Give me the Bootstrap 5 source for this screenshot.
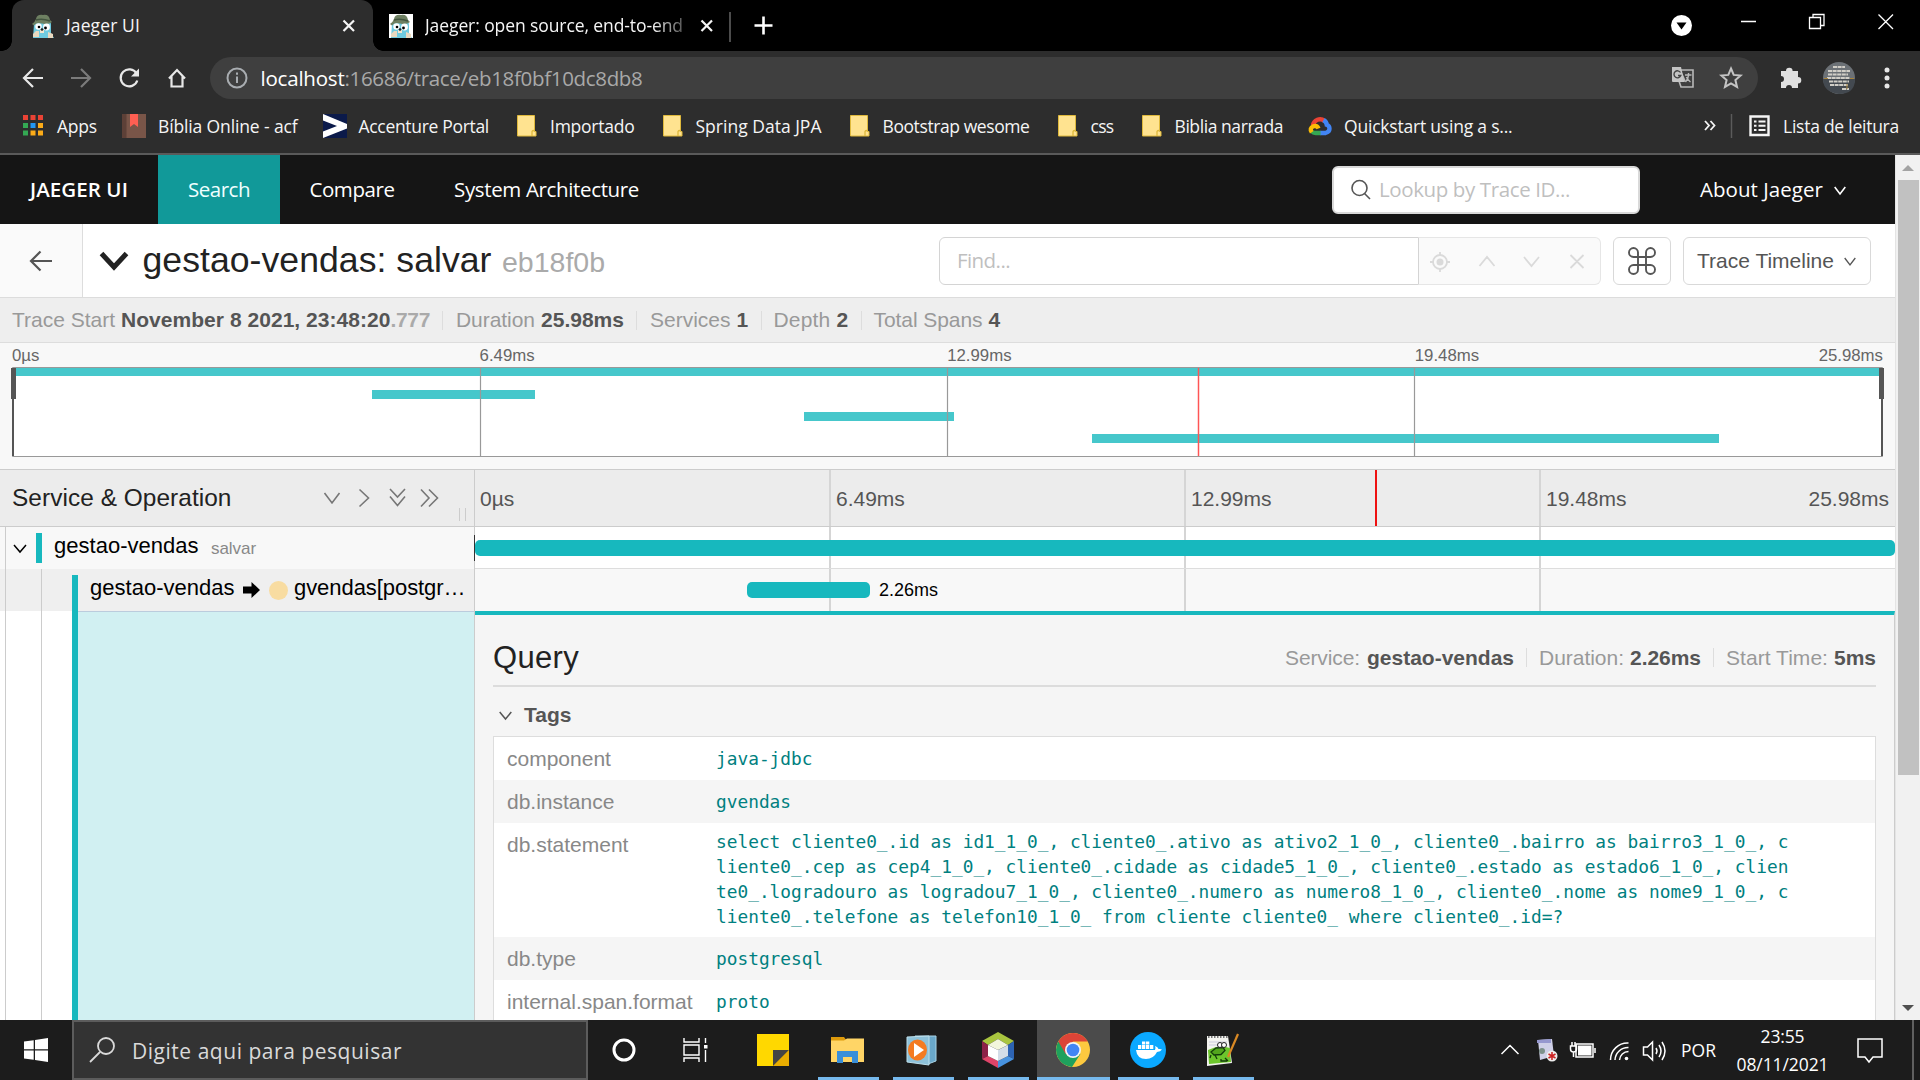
<!DOCTYPE html>
<html lang="pt-BR">
<head>
<meta charset="utf-8">
<meta name="viewport" content="width=device-width, initial-scale=1">
<title>Jaeger UI</title>
<link href="https://cdn.jsdelivr.net/npm/bootstrap@5.3.0/dist/css/bootstrap.min.css" rel="stylesheet">
<style>
:root{--teal:#17b8be}
body{width:1920px;height:1080px;overflow:hidden;background:#fff;font-family:"Liberation Sans",Arial,sans-serif;font-size:21px;line-height:1.2;color:#000}
svg{display:block;flex:none;overflow:visible}
.ln{fill:none;stroke:currentColor}
.ui{font-family:"Open Sans","Noto Sans",sans-serif;white-space:nowrap}
[data-w]{display:inline-block;flex:none;white-space:nowrap}
/* browser */
.tabstrip{height:51px;background:#000;font-size:17.5px;color:#f5f5f5}
.tab-on{width:361px;height:51px;margin-left:12px;background:#2d2d2d;border-radius:12px 12px 0 0;padding-left:19px}
.tab-on::before,.tab-on::after{content:"";position:absolute;bottom:0;width:10px;height:10px}
.tab-on::before{left:-10px;background:radial-gradient(circle at 0 0,transparent 9.5px,#2d2d2d 10px)}
.tab-on::after{right:-10px;background:radial-gradient(circle at 100% 0,transparent 9.5px,#2d2d2d 10px)}
.tab-off{width:357px;height:51px;padding-left:16px}
.fade-end{-webkit-mask-image:linear-gradient(90deg,#000 88%,rgba(0,0,0,.35));mask-image:linear-gradient(90deg,#000 88%,rgba(0,0,0,.35))}
.toolbar{height:54px;background:#2d2d2d;color:#e8e8e8;padding-left:21px}
.omni{width:1548px;height:42px;border-radius:21px;background:#3f3f3f;margin-left:21px;padding-left:16px;font-size:20.5px}
.bookmarks{height:50px;background:#2d2d2d;border-bottom:2px solid #5a5a5a;padding:0 0 6px 21px;gap:25px;font-size:17.5px;color:#f5f5f5}
.bookmarks .bm{gap:12px;display:flex;align-items:center}
/* app bar */
.topnav{height:69px;background:#151515;color:#fff;font-size:20.5px}
.topnav .cell{padding:0 30px;height:69px;display:flex;align-items:center}
.topnav .cur{background:#119999;color:#f0ffff}
.lookup{width:308px;height:48px;background:#fff;border:2px solid #d9d9d9;border-radius:6px;color:#bfbfbf;padding-left:17px;margin-right:60px}
.view{width:1895px;height:865px;overflow:hidden}
.sbar{width:25px;height:865px;background:#f1f1f1;border-left:1px solid #e4e4e4}
.thumb{width:21px;height:595px;background:#c1c1c1}
.tracehead{height:74px;border-bottom:1px solid #dcdcdc}
.backbtn{width:83px;height:73px;background:#fafafa;border-right:1px solid #ddd;color:#555}
.title{font-size:35.6px;color:#222}
.find{width:480px;height:48px;border:1px solid #d4d4d4;border-radius:6px 0 0 6px;padding-left:17px;color:#bfbfbf;font-size:20.5px}
.findadd{width:182px;height:48px;background:#fafafa;border:1px solid #e6e6e6;border-left:0;border-radius:0 6px 6px 0;color:#dadada}
.boxbtn{height:48px;border:1px solid #d9d9d9;border-radius:6px;color:#555}
.summary{height:45px;background:#eee;border-bottom:1px solid #ddd;color:#999;padding-left:12px}
.summary b,.meta b{color:#555}
.sep{width:1px;height:19px;background:#ddd;margin:0 12px}
.mini{height:127px;background:#f8f8f8;border-bottom:1px solid #ccc;padding-left:12px;font-size:16.8px;color:#666}
.mini .lab{width:467.6px;height:24px;line-height:25px}
.colhead{height:57px;background:#ececec;border-bottom:1px solid #ccc}
.left{width:475px;flex:none;overflow:hidden}
.colhead .left,.rows .left{border-right:1px solid #ccc}
.tick{width:355px;border-left:2px solid #d5d5d5;padding-left:5px;flex:none}
.tick:first-child{border-left:0;padding-left:6px;margin-left:-1px}
.tick:nth-child(4){width:356px}
.srow{height:42px}
.guide{flex:none;border-right:1px solid #ccc;height:42px}
.swatch{background:var(--teal);flex:none}
.spanbar{background:var(--teal);border-radius:5px;height:16px;position:absolute}
.detail{height:409px}
.panel{background:#f5f5f5;border-top:4px solid var(--teal);border-right:1px solid #ccc;padding:0 18px;width:1420px}
.dhead{height:72px;border-bottom:2px solid #dcdcdc;padding-top:15px}
.kv{border:1px solid #ddd;background:#fff}
.kv .r{display:flex;height:43px;padding-left:13px;line-height:44px}
.kv .r:nth-child(even){background:#f5f5f5}
.kv .k{width:209px;color:#888;flex:none}
.kv .v{font-family:"DejaVu Sans Mono",monospace;font-size:17.82px;color:#008080;white-space:pre}
/* taskbar */
.taskbar{height:60px;background:#1c1c1c;color:#fff}
.tsearch{width:516px;height:60px;background:#333;border:2px solid #5c5c5c;padding-left:16px;color:#dadada;font-size:21px;margin-right:1px}
.app{height:60px;display:flex;align-items:center;justify-content:center;flex:none}
.run{width:61px;border-bottom:3px solid #76b9ed;padding:3px 2px 0 0;margin-right:14px}
.app.cur{width:73px;background:#4b4b4b;margin:0 8px 0 -6px}
</style>
<script src="https://cdn.jsdelivr.net/npm/bootstrap@5.3.0/dist/js/bootstrap.bundle.min.js"></script>
</head>
<body>
<svg width="0" height="0" class="position-absolute">
<symbol id="gopher" viewBox="0 0 24 24"><path d="M3 10q0-3 9-3t8 4v8l3 5H2z" fill="#6fcbe0"/><path d="M5 17h3v6H2v-3zM17 18l5 2v4h-5z" fill="#e9d9c0"/><path d="M1 10q3-2 4-5 1-5 7-4 6-1 7 5l2 2q-3 3-10 1.500-6-1-8 2z" fill="#6e8062"/><path d="M5 6q6-2 14 1" stroke="#435540" stroke-width="1.500" fill="none"/><circle cx="7.500" cy="12.500" r="3.200" fill="#fff"/><circle cx="15.500" cy="13" r="3.400" fill="#fff"/><circle cx="8" cy="13" r="1.300"/><circle cx="14.500" cy="14" r="1.400"/><path d="M9 16h4v3H9z" fill="#f3e6d0"/><circle cx="11" cy="15.500" r="1.300" fill="#222"/></symbol>
<symbol id="folder" viewBox="0 0 24 24"><path d="M3.500 1.500h17v16h1.500v4.500H3.500z" fill="#ffe390" stroke="#dfb93c"/><path d="M18 22v-4.500q.3-1 2-1" fill="none" stroke="#dfb93c" stroke-width="1.300"/></symbol>
<symbol id="x" viewBox="0 0 14 14"><path d="M1.500 1.500l10.500 10.500M12 1.500L1.500 12" class="ln" stroke-width="2.200"/></symbol>
</svg>

<!-- tab strip -->
<div class="tabstrip ui d-flex align-items-center">
  <div class="tab-on position-relative d-flex align-items-center">
    <svg width="24" height="24"><use href="#gopher"/></svg>
    <span data-w="74" style="margin-left:11px">Jaeger UI</span>
    <svg width="14" height="14" style="margin-left:202px"><use href="#x"/></svg>
  </div>
  <div class="tab-off d-flex align-items-center">
    <svg width="24" height="24"><path d="M0 0h24v24H0z" fill="#fff"/><use href="#gopher"/></svg>
    <span class="fade-end" data-w="258" style="margin-left:12px">Jaeger: open source, end-to-end</span>
    <svg width="14" height="14" style="margin-left:17px"><use href="#x"/></svg>
  </div>
  <svg width="44" height="51"><path d="M0 12v30" stroke="#4c4c4c" stroke-width="2"/><path d="M24.500 25.500h18M33.500 16.500v18" stroke="#fff" stroke-width="2.600"/></svg>
  <svg class="ms-auto" width="250" height="51"><circle cx="11.500" cy="25.500" r="10.500" fill="#fff"/><path d="M6.500 22.500h10l-5 7z"/><path d="M71 21.500h15M139.500 17.500h11v11h-11zM143 17v-2.500h11v11h-3.500M208.500 14.500l14.500 14.500M223 14.500l-14.500 14.500" fill="none" stroke="#fff" stroke-width="1.300"/></svg>
</div>

<!-- toolbar -->
<div class="toolbar ui d-flex align-items-center">
  <svg width="168" height="42"><g class="ln" stroke-width="2.200"><path d="M22 21H3.500M12 12l-9 9 9 9"/><path d="M50 21h19M60 12l9 9-9 9" stroke="#7b7b7b"/><path d="M115.500 16.500a8.500 8.500 0 1 0 .8 7"/><path d="M148 21.500l8-8.500 8 8.500M150.500 19v10.500h11V19"/></g><path d="M118 11.500v8h-8z" fill="#e8e8e8"/></svg>
  <div class="omni d-flex align-items-center">
    <svg width="22" height="22"><circle cx="11" cy="11" r="9.500" fill="none" stroke="#a9adb1" stroke-width="2"/><path d="M11 9.500V16M11 5.500v2.300" stroke="#a9adb1" stroke-width="2"/></svg>
    <span data-w="84" class="text-white" style="margin-left:12.5px">localhost</span><span data-w="298" style="color:#a9a9a9">:16686/trace/eb18f0bf10dc8db8</span>
    <svg class="ms-auto" width="87" height="42"><path d="M9 13h13v17H10l-2-6h6z" fill="#3f3f3f" stroke="#b8b8b8" stroke-width="1.600"/><path d="M1 10h9l3.500 15H2q-1 0-1-1z" fill="#c4c4c4"/><path d="M9.500 15.500a3.500 3.500 0 1 0 .3 3H7" fill="none" stroke="#444" stroke-width="1.400"/><path d="M14 18h6.500M17.500 16v2q0 4-3 7M15.500 20q1 3 4 5" fill="none" stroke="#b8b8b8" stroke-width="1.400"/><path d="M60 11.500l2.700 6.400 6.900.6-5.200 4.600 1.600 6.800-6-3.600-6 3.600 1.600-6.800-5.200-4.600 6.900-.6z" fill="none" stroke="#c4c4c4" stroke-width="2"/></svg>
  </div>
  <svg width="162" height="42"><path d="M23 14h5a3.300 3.300 0 0 1 6.600 0H40v6a3.300 3.300 0 0 1 0 6.600V31h-6a3 3 0 0 0-6 0h-5v-6a3 3 0 0 0 0-6z" fill="#e0e0e0"/><circle cx="81" cy="21" r="16" fill="#6c7176"/><path d="M65 22h32q0 15-16 15-16-2-16-15z" fill="#434950"/><path d="M75 10h12M70 14h22M70 17.500h20M69 21h23M71 24.500h20M72 28h18M84 32h7" stroke="#d0cdc6" stroke-width="1.900" stroke-dasharray="4 .6"/><path d="M66 21.500h4M92 21.500h4M89 27v5" stroke="#a8843c" stroke-width="1"/><g fill="#e8e8e8"><circle cx="129" cy="13" r="2.500"/><circle cx="129" cy="21" r="2.500"/><circle cx="129" cy="29" r="2.500"/></g></svg>
</div>

<!-- bookmarks -->
<div class="bookmarks ui d-flex align-items-center">
  <div class="bm"><svg width="24" height="24"><path d="M2 1h5v5H2zM9.500 1h5v5h-5zM17 1h5v5h-5z" fill="#ea4335"/><path d="M2 9h5v5H2zM2 16.500h5v5H2z" fill="#34a853"/><path d="M9.500 9h5v5h-5z" fill="#2196f3"/><path d="M17 9h5v5h-5zM9.500 16.500h5v5h-5zM17 16.500h5v5h-5z" fill="#fbab18"/></svg><span data-w="40">Apps</span></div>
  <div class="bm"><svg width="24" height="24"><path d="M0 0h24v24H0z" fill="#795548"/><path d="M0 0h4.500v24H0z" fill="#5d4037"/><path d="M8 0h8v13l-4-3-4 3z" fill="#ff5f52"/></svg><span data-w="139.5">Bíblia Online - acf</span></div>
  <div class="bm"><svg width="24" height="24"><path d="M0 0h24v24H0z" fill="#0b1a4a"/><path d="M0 0l24 10v4.500L0 24v-6.500L14 12 0 6.500z" fill="#fff"/></svg><span data-w="130.5">Accenture Portal</span></div>
  <div class="bm"><svg width="24" height="24"><use href="#folder"/></svg><span data-w="84.5">Importado</span></div>
  <div class="bm"><svg width="24" height="24"><use href="#folder"/></svg><span data-w="126">Spring Data JPA</span></div>
  <div class="bm"><svg width="24" height="24"><use href="#folder"/></svg><span data-w="147">Bootstrap wesome</span></div>
  <div class="bm"><svg width="24" height="24"><use href="#folder"/></svg><span data-w="23">css</span></div>
  <div class="bm"><svg width="24" height="24"><use href="#folder"/></svg><span data-w="108.5">Biblia narrada</span></div>
  <div class="bm"><svg width="24" height="24"><g fill="none" stroke-width="4.400"><path d="M5 11.500A7 7 0 0 1 16.500 7" stroke="#ea4335"/><path d="M15.500 6q3 1.800 3.300 4.800 2.700 1 2.700 4t-4 4.200h-5.500" stroke="#4285f4"/><path d="M12.500 19H7.500q-2.300 0-3.500-1.500" stroke="#34a853"/><path d="M10.500 14.500q-1.500-3.500-5-2.200-4.500 2-1.700 6" stroke="#fbbc05"/></g></svg><span data-w="168.5">Quickstart using a s...</span></div>
  <div class="ms-auto d-flex align-items-center" style="padding-right:21px"><svg width="80" height="24"><path d="M2 7l4 4.500-4 4.500M7.500 7l4 4.500-4 4.500" class="ln" stroke-width="1.800"/><path d="M28.500 0v24" stroke="#5b5b5b" stroke-width="1.500"/><path d="M47.500 2.500h18v18.500h-18z" class="ln" stroke-width="2.400"/><path d="M51 7.500h2.500M55.500 7.500h7M51 11.700h2.500M55.500 11.700h7M51 16h2.500M55.500 16h7" class="ln" stroke-width="2"/></svg><span data-w="116">Lista de leitura</span></div>
</div>

<div class="d-flex" style="height:865px">
<main class="view">
  <nav class="topnav ui d-flex align-items-center">
    <div class="cell fw-semibold"><span data-w="98">JAEGER UI</span></div>
    <div class="cell cur"><span data-w="62">Search</span></div>
    <div class="cell" style="padding-left:29.5px"><span data-w="85">Compare</span></div>
    <div class="cell" style="padding-left:29.5px"><span data-w="185">System Architecture</span></div>
    <div class="lookup ms-auto d-flex align-items-center">
      <svg width="20" height="22"><circle cx="8.500" cy="9" r="7.500" fill="none" stroke="#555" stroke-width="1.600"/><path d="M13.500 14.500l5.500 5.500" stroke="#555" stroke-width="1.600"/></svg>
      <span data-w="191" style="margin-left:8px">Lookup by Trace ID...</span>
    </div>
    <span data-w="123">About Jaeger</span>
    <svg width="12" height="9" style="margin:2px 49px 0 11px"><path d="M.7 1l5.300 7 5.300-7" class="ln" stroke-width="1.600"/></svg>
  </nav>

  <header class="tracehead d-flex align-items-center">
    <div class="backbtn d-flex align-items-center justify-content-center"><svg width="24" height="22"><path d="M23 11H2M11.500 1.500L2 11l9.500 9.500" class="ln" stroke-width="2.200"/></svg></div>
    <svg width="30" height="20" style="margin-left:15.5px"><path d="M2.500 2.500l12.500 13.500L27.500 2.500" fill="none" stroke="#222" stroke-width="5"/></svg>
    <span class="title" data-w="349" style="margin-left:14px">gestao-vendas: salvar</span>
    <span data-w="103" style="font-size:28.5px;color:#aaa;margin:4px 0 0 10.5px">eb18f0b</span>
    <div class="find ms-auto d-flex align-items-center ui"><span data-w="53">Find...</span></div>
    <div class="findadd"><svg width="182" height="46"><g class="ln" stroke-width="1.800"><circle cx="21" cy="24" r="7"/><path d="M21 14v4M21 30v4M11 24h4M27 24h4M60.500 28l7.500-9 7.500 9M105 19l7.500 9 7.500-9M151.500 17l13 13M164.500 17l-13 13"/></g><circle cx="21" cy="24" r="3.500" fill="#dadada"/></svg></div>
    <div class="boxbtn d-flex align-items-center justify-content-center" style="width:58px;margin-left:12px"><svg width="28" height="28"><path d="M10 10V5.500A4.500 4.500 0 1 0 5.500 10h17A4.500 4.500 0 1 0 18 5.500v17a4.500 4.500 0 1 0 4.500-4.500h-17a4.500 4.500 0 1 0 4.500 4.500z" class="ln" stroke-width="1.900"/></svg></div>
    <div class="boxbtn d-flex align-items-center" style="width:188px;margin:0 24px 0 12px;padding-left:13px"><span data-w="137">Trace Timeline</span><svg width="12" height="9" style="margin:1px 0 0 10px"><path d="M.7 1l5.300 7 5.300-7" class="ln" stroke-width="1.300"/></svg></div>
  </header>

  <div class="summary d-flex align-items-center">
    <span data-w="103">Trace Start</span><b data-w="269.5" style="margin-left:6px">November 8 2021, 23:48:20</b><b data-w="39.5" style="color:#aaa">.777</b><i class="sep" style="margin-right:13px"></i>
    <span data-w="79">Duration</span><b data-w="83" style="margin-left:6px">25.98ms</b><i class="sep" style="margin-right:13px"></i>
    <span data-w="80.5">Services</span><b data-w="12" style="margin-left:6px">1</b><i class="sep"></i>
    <span data-w="57">Depth</span><b data-w="12" style="margin-left:6px">2</b><i class="sep"></i>
    <span data-w="109">Total Spans</span><b data-w="12" style="margin-left:6px">4</b>
  </div>

  <section class="mini">
    <div class="d-flex position-relative" style="width:1871px"><div class="lab">0µs</div><div class="lab">6.49ms</div><div class="lab">12.99ms</div><div class="lab">19.48ms</div><div class="position-absolute end-0 lab w-auto">25.98ms</div></div>
    <svg width="1871" height="90"><path d="M.5.5h1870v89H.5z" fill="#fff" stroke="#999"/><path d="M1 1h1869v8H1zM360 23h163v9H360zM792 45h150v9H792zM1080 67h627v9H1080z" fill="#46c7cb"/><path d="M468.500 1v88M935.500 1v88M1402.500 1v88" stroke="#999" stroke-width="1.200"/><path d="M1186.500 1v88" stroke="#f55" stroke-width="1.500"/><path d="M1 1v88M1870 1v88" stroke="#555" stroke-width="2"/><path d="M-1 1h5v31h-5zM1867 1h5v31h-5z" fill="#555"/></svg>
  </section>

  <section class="colhead d-flex">
    <div class="left d-flex align-items-center" style="padding-left:12px">
      <span data-w="219.5" style="font-size:24.4px;color:#222">Service &amp; Operation</span>
      <svg width="150" height="57" style="margin-left:92.5px;color:#777"><path class="ln" stroke-width="1.600" d="M.5 23l7.500 10L15.500 23M35.500 19.500l9 8.500-9 8.500M66 19l7.500 8 7.500-8M66 26.500l7.500 9 7.500-9M97 19.500l8 8.500-8 8.500M105 19.500l8.500 8.500-8.500 8.500"/><path d="M135.500 38v13M141.500 38v13" stroke="#ccc"/></svg>
    </div>
    <div class="d-flex position-relative align-items-stretch" style="color:#555;line-height:57px"><div class="tick">0µs</div><div class="tick">6.49ms</div><div class="tick">12.99ms</div><div class="tick">19.48ms</div><div class="position-absolute" style="right:6px">25.98ms</div><i class="position-absolute h-100" style="left:900px;width:2px;background:#e11"></i></div>
  </section>

  <section class="rows">
    <div class="srow d-flex">
      <div class="left d-flex align-items-center" style="background:#f8f8f8;font-size:22px">
        <i class="guide" style="width:6px"></i>
        <svg width="14" height="9" style="margin-left:7px"><path d="M1 1l6 7 6-7" class="ln" stroke-width="1.500"/></svg>
        <i class="swatch" style="width:6px;height:30px;margin-left:9px"></i>
        <span data-w="144.5" style="margin:-3px 0 0 12px">gestao-vendas</span><span data-w="45" style="font-size:17px;color:#888;margin:3px 0 0 12.5px">salvar</span>
      </div>
      <div class="d-flex position-relative" style="border-bottom:1px solid #ddd"><i class="tick"></i><i class="tick"></i><i class="tick"></i><i class="tick"></i><b class="spanbar w-100" style="top:13px"></b><i class="position-absolute" style="left:-1px;top:8px;width:1px;height:26px;background:#333"></i></div>
    </div>
    <div class="srow d-flex">
      <div class="left d-flex align-items-center" style="background:#efefef;font-size:22px">
        <i class="guide" style="width:6px"></i><i class="guide" style="width:36px"></i>
        <i class="swatch align-self-end" style="width:6px;height:36px;margin-left:30px"></i>
        <span data-w="144.5" style="margin:-3px 0 0 12px">gestao-vendas</span>
        <svg width="17" height="16" style="margin-left:8.5px"><path d="M0 4.500h8.500V0L17 8l-8.500 8v-4.500H0z"/></svg>
        <i class="rounded-circle" style="width:19px;height:19px;background:#f8dca1;margin-left:9px"></i>
        <span data-w="171.5" style="margin:-3px 0 0 6px">gvendas[postgr…</span>
      </div>
      <div class="d-flex position-relative" style="background:#f8f8f8"><i class="tick"></i><i class="tick"></i><i class="tick"></i><i class="tick"></i><b class="spanbar" style="top:13px;left:272px;width:123px"></b><span class="position-absolute" data-w="59" style="left:404px;top:11px;font-size:18px">2.26ms</span></div>
    </div>
    <div class="detail d-flex">
      <div class="left d-flex" style="background:#d1f0f2">
        <i class="guide h-100 bg-white" style="width:6px"></i><i class="guide h-100 bg-white" style="width:36px"></i><i class="bg-white" style="width:30px"></i><i class="swatch" style="width:6px"></i>
        <i class="flex-fill" style="height:1px;background:#bcd"></i>
      </div>
      <div class="panel">
        <div class="dhead d-flex align-items-center justify-content-between">
          <span data-w="86" style="font-size:31px;color:#222">Query</span>
          <div class="meta d-flex align-items-center" style="color:#999"><span data-w="75">Service:</span><b data-w="147" style="margin-left:7px">gestao-vendas</b><i class="sep"></i><span data-w="85">Duration:</span><b data-w="71" style="margin-left:6px">2.26ms</b><i class="sep"></i><span data-w="102">Start Time:</span><b data-w="42" style="margin-left:6px">5ms</b></div>
        </div>
        <div class="d-flex align-items-center fw-bold" style="height:49px;color:#555;padding:7px 0 0 6px"><svg width="13" height="9" style="margin-right:12px"><path d="M.7 1l5.800 7 5.800-7" class="ln" stroke-width="1.500"/></svg>Tags</div>
        <div class="kv">
          <div class="r"><span class="k">component</span><span class="v">java-jdbc</span></div>
          <div class="r"><span class="k">db.instance</span><span class="v">gvendas</span></div>
          <div class="r" style="height:114px"><span class="k">db.statement</span><span class="v" style="line-height:25px;padding-top:6px">select cliente0_.id as id1_1_0_, cliente0_.ativo as ativo2_1_0_, cliente0_.bairro as bairro3_1_0_, c
liente0_.cep as cep4_1_0_, cliente0_.cidade as cidade5_1_0_, cliente0_.estado as estado6_1_0_, clien
te0_.logradouro as logradou7_1_0_, cliente0_.numero as numero8_1_0_, cliente0_.nome as nome9_1_0_, c
liente0_.telefone as telefon10_1_0_ from cliente cliente0_ where cliente0_.id=?</span></div>
          <div class="r"><span class="k">db.type</span><span class="v">postgresql</span></div>
          <div class="r"><span class="k">internal.span.format</span><span class="v">proto</span></div>
        </div>
      </div>
    </div>
  </section>
</main>
<aside class="sbar d-flex flex-column align-items-center">
  <svg width="12" height="25"><path d="M0 16h12L6 10z" fill="#a3a3a3"/></svg>
  <i class="thumb"></i>
  <svg class="mt-auto" width="12" height="20"><path d="M0 5h12l-6 6z" fill="#505050"/></svg>
</aside>
</div>

<!-- taskbar -->
<footer class="taskbar ui d-flex align-items-center">
  <div class="app" style="width:72px"><svg width="24" height="24"><path d="M0 3.500l9.700-1.300v9.100H0zM11 2l13-2v11.300H11zM0 12.500h9.700v9.200L0 20.500zM11 12.500h13V24l-13-2z" fill="#fff"/></svg></div>
  <div class="tsearch d-flex align-items-center"><svg width="26" height="26"><circle cx="16" cy="9" r="8" class="ln" stroke-width="1.800"/><path d="M10 15L0 25" class="ln" stroke-width="1.800"/></svg><span data-w="270" style="margin:3px 0 0 16px">Digite aqui para pesquisar</span></div>
  <div class="app" style="width:70px"><svg width="24" height="24"><circle cx="12" cy="12" r="10" class="ln" stroke-width="3"/></svg></div>
  <div class="app" style="width:74px"><svg width="26" height="24"><path d="M1 0v4h15V0M1 24v-4h15v4M1 7h15v10H1zM22.500 0v5M22.500 12v12" class="ln" stroke-width="1.400"/><path d="M21 7h3.500v3.500H21z" fill="#fff"/></svg></div>
  <div class="app" style="width:85px;padding-right:5px"><svg width="32" height="32"><path d="M0 0h32v16L16 32H0z" fill="#ffd800"/><path d="M16 32V16h16z" fill="#444"/><path d="M16 32l16-16v16z" fill="#e9ad00"/></svg></div>
  <div class="app run"><svg width="33" height="28"><path d="M0 1h13l3 4H0z" fill="#dd9a0b"/><path d="M0 4.500h13l3-2h17V26H0z" fill="#ffd566"/><path d="M6 27V15h21v12h-6v-6h-9v6z" fill="#3a8fd9"/></svg></div>
  <div class="app run" style="padding-right:5px"><svg width="31" height="31"><path d="M9 1h21v25l-8 3z" fill="#6aa8ca" stroke="#a9d3e6"/><path d="M1 2l22-1v29L1 27z" fill="#8ec2da" stroke="#bfe0ec"/><ellipse cx="11.500" cy="15" rx="9.500" ry="10.500" fill="#f47b22"/><path d="M8 8l10 7-10 7z" fill="#fff"/></svg></div>
  <div class="app run"><svg width="32" height="36"><path d="M16 0l16 9-6 4-10-6-10 6-6-4z" fill="#a9c53f"/><path d="M0 9l6 4v11l-6 3z" fill="#8d2148"/><path d="M32 9l-6 4v11l6 3z" fill="#2d63b2"/><path d="M0 27l6-3 10 5v7z" fill="#df4469"/><path d="M32 27l-6-3-10 5v7z" fill="#4792df"/><path d="M16 7l10 6-10 5-10-5z" fill="#f3f6dc"/><path d="M6 13l10 5v11L6 24z" fill="#fff"/><path d="M26 13l-10 5v11l10-5z" fill="#d3dde8"/></svg></div>
  <div class="app run cur"><svg width="34" height="34" viewBox="0 0 34 34"><circle cx="17" cy="17" r="17" fill="#fdc93f"/><path d="M17 17L2.300 8.500A17 17 0 0 0 16 34l8.400-13z" fill="#1fa15d"/><path d="M2.300 8.500A17 17 0 0 1 31.700 8.500H17L9.700 21z" fill="#dc4437"/><circle cx="17" cy="17" r="8" fill="#f4f4f4"/><circle cx="17" cy="17" r="6.300" fill="#4285f4"/></svg></div>
  <div class="app run"><svg width="36" height="36"><circle cx="18" cy="18" r="18" fill="#0aa8ff"/><path d="M6 18h19q1-2 0-4 3 1 3.500 3 2-.4 3.500.6-1.500 2.400-5 2.400-3.500 7-11 7-9 0-10-9z" fill="#fff"/><path d="M8 13h3.300v4H8zM12 13h3.300v4H12zM16 13h3.300v4H16zM20 13h3.300v4H20zM12 9.500h3.300v3H12zM16 9.500h3.300v3H16z" fill="#fff"/></svg></div>
  <div class="app run"><svg width="34" height="34"><path d="M1 3h21l4 27-25 3z" fill="#f4f4f0"/><path d="M2 17q11-6 22-2l1 14-22 2z" fill="#6cc62c"/><path d="M3 9h18M3 12h18" stroke="#ccd" stroke-width="1"/><path d="M2 4h20" stroke="#777" stroke-width="2" stroke-dasharray="1.500 1.500"/><path d="M5 19l5-4 7-.5 2 3-4 4-7 .5z" fill="#52a51d" stroke="#123d0a" stroke-width="1.300"/><circle cx="14" cy="12" r="2.500" fill="#fff" stroke="#222"/><circle cx="18" cy="12" r="2.500" fill="#fff" stroke="#222"/><path d="M5 22l-1 3M9 22l2 4M15 26v2h6M19 25l3 3" fill="none" stroke="#123d0a" stroke-width="1.300"/><path d="M22 24L32 1" stroke="#d98924" stroke-width="2.200"/></svg></div>
  <div class="ms-auto d-flex align-items-center">
    <svg width="166" height="60"><g class="ln" stroke-width="1.500"><path d="M1.500 34l8.500-8.500L18.500 34M76 24h17v13H76zM95 28v5"/><path d="M70.500 26h6v3q0 3-3 3t-3-3zM72 22v4M75 22v4M73.500 32v5"/><path d="M110.500 40a17 17 0 0 1 18-17M115 40a13 13 0 0 1 13.500-12.500M119.500 40a9 9 0 0 1 9-8.500"/><path d="M143.500 27h4l5-5v18l-5-5h-4zM156 28q2 3 0 6M159 25q4 6 0 12M162 22q6 9 0 18"/></g><path d="M78 25.500h13.500v10H78z" fill="#fff"/><circle cx="126.500" cy="38.500" r="1.800" fill="#fff"/><path d="M38 20l14-1 2 17-14 4z" fill="#cfd0e8"/><path d="M37 20l14-1v4H37z" fill="#9698cf"/><circle cx="42" cy="31" r="3" fill="#7d918b"/><circle cx="52" cy="36" r="5.500" fill="#eee"/><path d="M52 32v8M48.500 34l7 4M55.500 34l-7 4" stroke="#c22" stroke-width="1.500"/></svg>
    <span data-w="35" style="font-size:17.500px;margin-left:15px">POR</span>
    <div class="text-center" style="width:93px;margin-left:20px;font-size:17.500px;line-height:28px"><span data-w="44">23:55</span><br><span data-w="92">08/11/2021</span></div>
    <svg width="91" height="60"><path d="M29 19h24v18H44l-4 5-4-5h-7z" class="ln" stroke-width="1.500"/><path d="M84 0v60" stroke="#777" stroke-width="1.500"/></svg>
  </div>
</footer>
<script>
// Track each label so its text fills its nominal width
document.querySelectorAll('[data-w]').forEach(function(el){
  var w=+el.dataset.w,n=[...el.textContent].length,m=el.getBoundingClientRect().width;
  el.style.letterSpacing=((w-m)/n).toFixed(3)+'px';
  el.style.width=w+'px';
});
</script>
</body>
</html>
